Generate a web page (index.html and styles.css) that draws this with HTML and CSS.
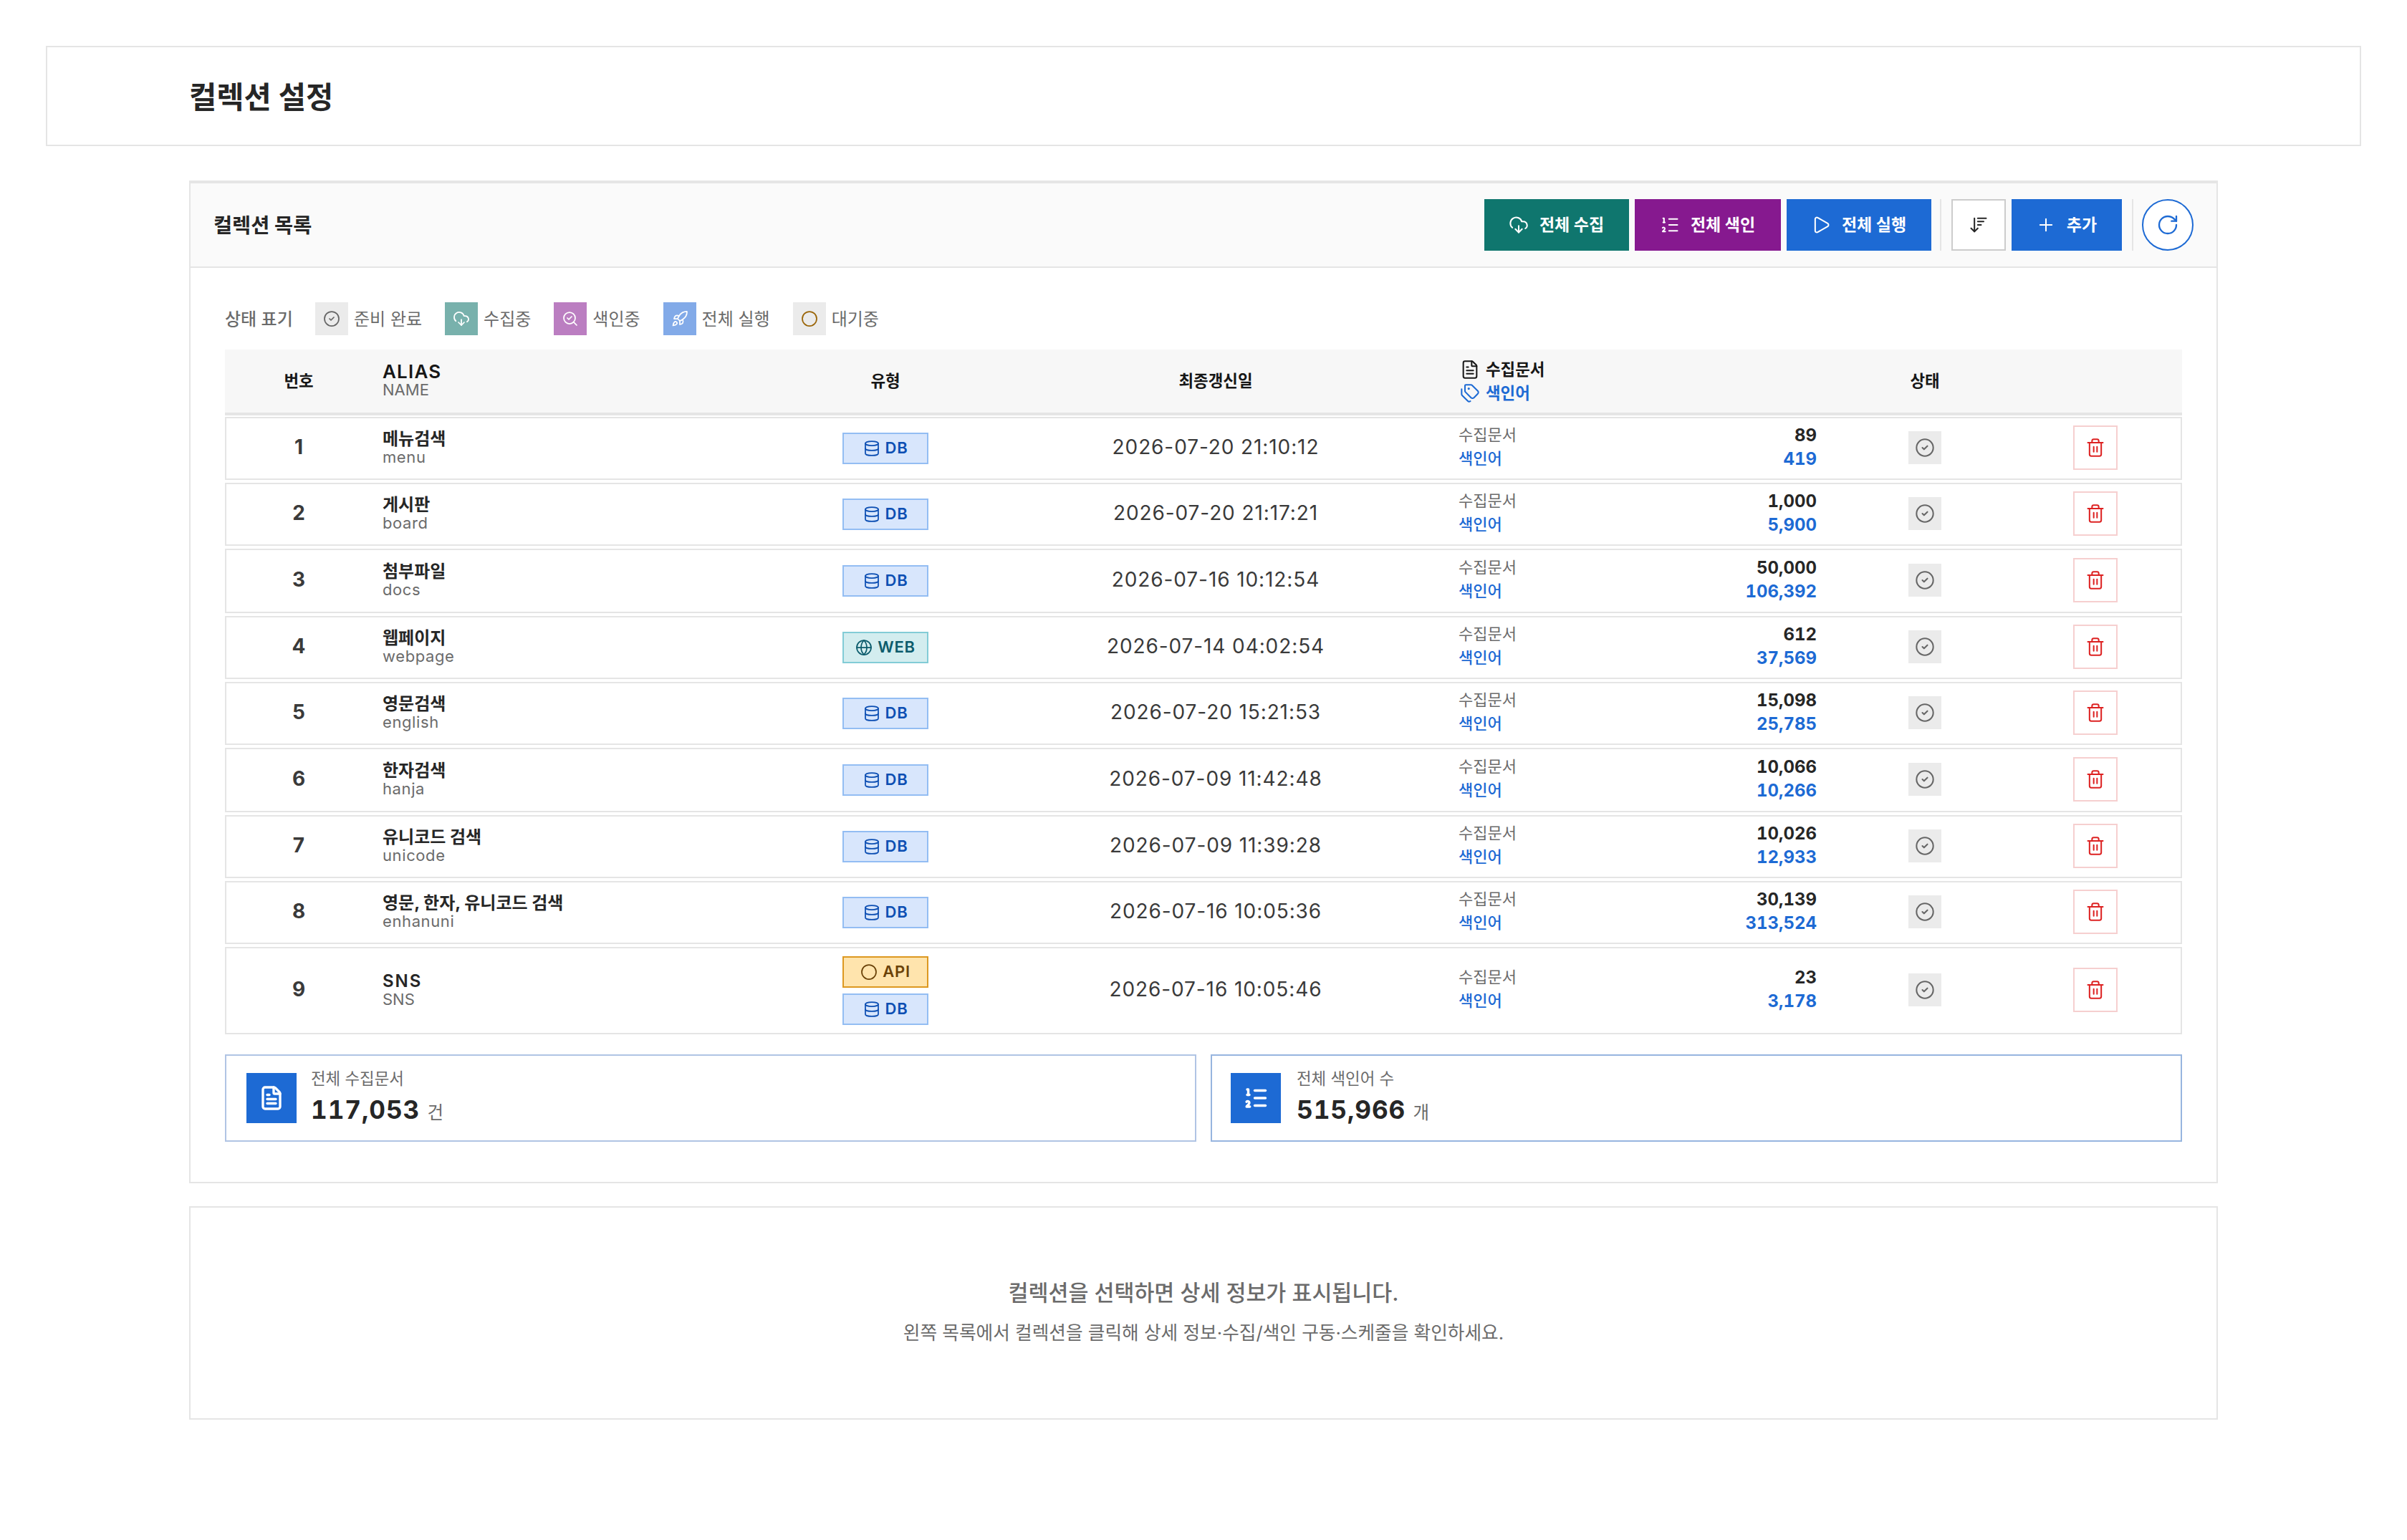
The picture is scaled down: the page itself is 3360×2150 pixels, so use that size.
FILE: index.html
```html
<!DOCTYPE html>
<html lang="ko">
<head>
    <meta charset="UTF-8">
    <meta name="viewport" content="width=device-width, initial-scale=1.0">
    <title>컬렉션 설정</title>
    <link rel="stylesheet" href="styles.css">
</head>
<body>

<!-- icon sprite -->
<svg class="sprite" xmlns="http://www.w3.org/2000/svg">
    <symbol id="i-cloud" viewBox="0 0 24 24"><path d="M12 13v8l-4-4"/><path d="m12 21 4-4"/><path d="M4.393 15.269A7 7 0 1 1 15.71 8h1.79a4.5 4.5 0 0 1 2.436 8.284"/></symbol>
    <symbol id="i-list" viewBox="0 0 24 24"><path d="M11 5h10"/><path d="M11 12h10"/><path d="M11 19h10"/><path d="M4 4h1v5"/><path d="M4 9h2"/><path d="M6.5 20H3.4c0-1 2.6-1.925 2.6-3.5a1.5 1.5 0 0 0-2.6-1.02"/></symbol>
    <symbol id="i-play" viewBox="0 0 24 24"><path d="M5 5a2 2 0 0 1 3.008-1.728l11.997 6.998a2 2 0 0 1 .003 3.458l-12 7A2 2 0 0 1 5 19z"/></symbol>
    <symbol id="i-sort" viewBox="0 0 24 24"><path d="m3 16 4 4 4-4"/><path d="M7 20V4"/><path d="M11 4h10"/><path d="M11 8h7"/><path d="M11 12h4"/></symbol>
    <symbol id="i-plus" viewBox="0 0 24 24"><path d="M5 12h14"/><path d="M12 5v14"/></symbol>
    <symbol id="i-refresh" viewBox="0 0 24 24"><path d="M21 12a9 9 0 1 1-9-9c2.52 0 4.93 1 6.74 2.74L21 8"/><path d="M21 3v5h-5"/></symbol>
    <symbol id="i-check" viewBox="0 0 24 24"><circle cx="12" cy="12" r="10"/><path d="m9 12 2 2 4-4"/></symbol>
    <symbol id="i-search" viewBox="0 0 24 24"><path d="m8 11 2 2 4-4"/><circle cx="11" cy="11" r="8"/><path d="m21 21-4.3-4.3"/></symbol>
    <symbol id="i-rocket" viewBox="0 0 24 24"><path d="M12 15v5s3.03-.55 4-2c1.08-1.62 0-5 0-5"/><path d="M4.5 16.5c-1.5 1.26-2 5-2 5s3.74-.5 5-2c.71-.84.7-2.13-.09-2.91a2.18 2.18 0 0 0-2.91-.09"/><path d="M9 12a22 22 0 0 1 2-3.95A12.88 12.88 0 0 1 22 2c0 2.72-.78 7.5-6 11a22.4 22.4 0 0 1-4 2z"/><path d="M9 12H4s.55-3.03 2-4c1.62-1.08 5 .05 5 .05"/></symbol>
    <symbol id="i-circle" viewBox="0 0 24 24"><circle cx="12" cy="12" r="10"/></symbol>
    <symbol id="i-file" viewBox="0 0 24 24"><path d="M6 22a2 2 0 0 1-2-2V4a2 2 0 0 1 2-2h8a2.4 2.4 0 0 1 1.704.706l3.588 3.588A2.4 2.4 0 0 1 20 8v12a2 2 0 0 1-2 2z"/><path d="M14 2v5a1 1 0 0 0 1 1h5"/><path d="M10 9H8"/><path d="M16 13H8"/><path d="M16 17H8"/></symbol>
    <symbol id="i-tags" viewBox="0 0 24 24"><path d="M13.172 2a2 2 0 0 1 1.414.586l6.71 6.71a2.4 2.4 0 0 1 0 3.408l-4.592 4.592a2.4 2.4 0 0 1-3.408 0l-6.71-6.71A2 2 0 0 1 6 9.172V3a1 1 0 0 1 1-1z"/><path d="M2 7v6.172a2 2 0 0 0 .586 1.414l6.71 6.71a2.4 2.4 0 0 0 3.191.193"/><circle cx="10.5" cy="6.5" r=".5" fill="currentColor"/></symbol>
    <symbol id="i-db" viewBox="0 0 24 24"><ellipse cx="12" cy="5" rx="9" ry="3"/><path d="M3 5V19A9 3 0 0 0 21 19V5"/><path d="M3 12A9 3 0 0 0 21 12"/></symbol>
    <symbol id="i-globe" viewBox="0 0 24 24"><circle cx="12" cy="12" r="10"/><path d="M12 2a14.5 14.5 0 0 0 0 20 14.5 14.5 0 0 0 0-20"/><path d="M2 12h20"/></symbol>
    <symbol id="i-trash" viewBox="0 0 24 24"><path d="M10 11v6"/><path d="M14 11v6"/><path d="M19 6v14a2 2 0 0 1-2 2H7a2 2 0 0 1-2-2V6"/><path d="M3 6h18"/><path d="M8 6V4a2 2 0 0 1 2-2h4a2 2 0 0 1 2 2v2"/></symbol>
</svg>

<header class="page-header">
    <h1>컬렉션 설정</h1>
</header>

<main class="container">
    <section class="card">
        <div class="card-header">
            <h2>컬렉션 목록</h2>
            <div class="toolbar">
                <button class="btn btn-collect"><svg class="icon"><use href="#i-cloud"/></svg><span>전체 수집</span></button>
                <button class="btn btn-index"><svg class="icon"><use href="#i-list"/></svg><span>전체 색인</span></button>
                <button class="btn btn-run"><svg class="icon"><use href="#i-play"/></svg><span>전체 실행</span></button>
                <span class="divider"></span>
                <button class="btn btn-sort"><svg class="icon"><use href="#i-sort"/></svg></button>
                <button class="btn btn-add"><svg class="icon"><use href="#i-plus"/></svg><span>추가</span></button>
                <span class="divider divider-last"></span>
                <button class="btn-refresh"><svg class="icon"><use href="#i-refresh"/></svg></button>
            </div>
        </div>

        <div class="card-body">
            <div class="legend">
                <span class="legend-title">상태 표기</span>
                <div class="legend-item"><span class="status"><svg class="icon"><use href="#i-check"/></svg></span><em>준비 완료</em></div>
                <div class="legend-item"><span class="status collecting"><svg class="icon"><use href="#i-cloud"/></svg></span><em>수집중</em></div>
                <div class="legend-item"><span class="status indexing"><svg class="icon"><use href="#i-search"/></svg></span><em>색인중</em></div>
                <div class="legend-item"><span class="status running"><svg class="icon"><use href="#i-rocket"/></svg></span><em>전체 실행</em></div>
                <div class="legend-item"><span class="status waiting"><svg class="icon"><use href="#i-circle"/></svg></span><em>대기중</em></div>
            </div>

            <div class="list-head">
                <div class="col-center">번호</div>
                <div class="head-name"><strong>ALIAS</strong><span>NAME</span></div>
                <div class="col-center">유형</div>
                <div class="col-center">최종갱신일</div>
                <div class="head-count">
                    <div><svg class="icon"><use href="#i-file"/></svg>수집문서</div>
                    <div class="blue"><svg class="icon"><use href="#i-tags"/></svg>색인어</div>
                </div>
                <div class="col-center">상태</div>
                <div></div>
            </div>

            <div class="list">
                <div class="row">
                    <div class="no">1</div>
                    <div class="name"><strong>메뉴검색</strong><span>menu</span></div>
                    <div class="types"><span class="badge db"><svg class="icon"><use href="#i-db"/></svg><b>DB</b></span></div>
                    <div class="date">2026-07-20 21:10:12</div>
                    <div class="count"><div><span>수집문서</span><b>89</b></div><div class="blue"><span>색인어</span><b>419</b></div></div>
                    <div class="state"><span class="status"><svg class="icon"><use href="#i-check"/></svg></span></div>
                    <div class="action"><button class="btn-delete"><svg class="icon"><use href="#i-trash"/></svg></button></div>
                </div>
                <div class="row">
                    <div class="no">2</div>
                    <div class="name"><strong>게시판</strong><span>board</span></div>
                    <div class="types"><span class="badge db"><svg class="icon"><use href="#i-db"/></svg><b>DB</b></span></div>
                    <div class="date">2026-07-20 21:17:21</div>
                    <div class="count"><div><span>수집문서</span><b>1,000</b></div><div class="blue"><span>색인어</span><b>5,900</b></div></div>
                    <div class="state"><span class="status"><svg class="icon"><use href="#i-check"/></svg></span></div>
                    <div class="action"><button class="btn-delete"><svg class="icon"><use href="#i-trash"/></svg></button></div>
                </div>
                <div class="row">
                    <div class="no">3</div>
                    <div class="name"><strong>첨부파일</strong><span>docs</span></div>
                    <div class="types"><span class="badge db"><svg class="icon"><use href="#i-db"/></svg><b>DB</b></span></div>
                    <div class="date">2026-07-16 10:12:54</div>
                    <div class="count"><div><span>수집문서</span><b>50,000</b></div><div class="blue"><span>색인어</span><b>106,392</b></div></div>
                    <div class="state"><span class="status"><svg class="icon"><use href="#i-check"/></svg></span></div>
                    <div class="action"><button class="btn-delete"><svg class="icon"><use href="#i-trash"/></svg></button></div>
                </div>
                <div class="row">
                    <div class="no">4</div>
                    <div class="name"><strong>웹페이지</strong><span>webpage</span></div>
                    <div class="types"><span class="badge web"><svg class="icon"><use href="#i-globe"/></svg><b>WEB</b></span></div>
                    <div class="date">2026-07-14 04:02:54</div>
                    <div class="count"><div><span>수집문서</span><b>612</b></div><div class="blue"><span>색인어</span><b>37,569</b></div></div>
                    <div class="state"><span class="status"><svg class="icon"><use href="#i-check"/></svg></span></div>
                    <div class="action"><button class="btn-delete"><svg class="icon"><use href="#i-trash"/></svg></button></div>
                </div>
                <div class="row">
                    <div class="no">5</div>
                    <div class="name"><strong>영문검색</strong><span>english</span></div>
                    <div class="types"><span class="badge db"><svg class="icon"><use href="#i-db"/></svg><b>DB</b></span></div>
                    <div class="date">2026-07-20 15:21:53</div>
                    <div class="count"><div><span>수집문서</span><b>15,098</b></div><div class="blue"><span>색인어</span><b>25,785</b></div></div>
                    <div class="state"><span class="status"><svg class="icon"><use href="#i-check"/></svg></span></div>
                    <div class="action"><button class="btn-delete"><svg class="icon"><use href="#i-trash"/></svg></button></div>
                </div>
                <div class="row">
                    <div class="no">6</div>
                    <div class="name"><strong>한자검색</strong><span>hanja</span></div>
                    <div class="types"><span class="badge db"><svg class="icon"><use href="#i-db"/></svg><b>DB</b></span></div>
                    <div class="date">2026-07-09 11:42:48</div>
                    <div class="count"><div><span>수집문서</span><b>10,066</b></div><div class="blue"><span>색인어</span><b>10,266</b></div></div>
                    <div class="state"><span class="status"><svg class="icon"><use href="#i-check"/></svg></span></div>
                    <div class="action"><button class="btn-delete"><svg class="icon"><use href="#i-trash"/></svg></button></div>
                </div>
                <div class="row">
                    <div class="no">7</div>
                    <div class="name"><strong>유니코드 검색</strong><span>unicode</span></div>
                    <div class="types"><span class="badge db"><svg class="icon"><use href="#i-db"/></svg><b>DB</b></span></div>
                    <div class="date">2026-07-09 11:39:28</div>
                    <div class="count"><div><span>수집문서</span><b>10,026</b></div><div class="blue"><span>색인어</span><b>12,933</b></div></div>
                    <div class="state"><span class="status"><svg class="icon"><use href="#i-check"/></svg></span></div>
                    <div class="action"><button class="btn-delete"><svg class="icon"><use href="#i-trash"/></svg></button></div>
                </div>
                <div class="row">
                    <div class="no">8</div>
                    <div class="name"><strong>영문, 한자, 유니코드 검색</strong><span>enhanuni</span></div>
                    <div class="types"><span class="badge db"><svg class="icon"><use href="#i-db"/></svg><b>DB</b></span></div>
                    <div class="date">2026-07-16 10:05:36</div>
                    <div class="count"><div><span>수집문서</span><b>30,139</b></div><div class="blue"><span>색인어</span><b>313,524</b></div></div>
                    <div class="state"><span class="status"><svg class="icon"><use href="#i-check"/></svg></span></div>
                    <div class="action"><button class="btn-delete"><svg class="icon"><use href="#i-trash"/></svg></button></div>
                </div>
                <div class="row row-tall">
                    <div class="no">9</div>
                    <div class="name name-latin"><strong>SNS</strong><span>SNS</span></div>
                    <div class="types">
                        <span class="badge api"><svg class="icon"><use href="#i-circle"/></svg><b>API</b></span>
                        <span class="badge db"><svg class="icon"><use href="#i-db"/></svg><b>DB</b></span>
                    </div>
                    <div class="date">2026-07-16 10:05:46</div>
                    <div class="count"><div><span>수집문서</span><b>23</b></div><div class="blue"><span>색인어</span><b>3,178</b></div></div>
                    <div class="state"><span class="status"><svg class="icon"><use href="#i-check"/></svg></span></div>
                    <div class="action"><button class="btn-delete"><svg class="icon"><use href="#i-trash"/></svg></button></div>
                </div>
            </div>

            <div class="summary">
                <div class="summary-card">
                    <span class="summary-icon"><svg class="icon"><use href="#i-file"/></svg></span>
                    <div>
                        <div class="summary-label">전체 수집문서</div>
                        <div class="summary-value">117,053 <small>건</small></div>
                    </div>
                </div>
                <div class="summary-card summary-index">
                    <span class="summary-icon"><svg class="icon"><use href="#i-list"/></svg></span>
                    <div>
                        <div class="summary-label">전체 색인어 수</div>
                        <div class="summary-value">515,966 <small>개</small></div>
                    </div>
                </div>
            </div>
        </div>
    </section>

    <section class="empty">
        <p class="empty-title">컬렉션을 선택하면 상세 정보가 표시됩니다.</p>
        <p class="empty-text">왼쪽 목록에서 컬렉션을 클릭해 상세 정보·수집/색인 구동·스케줄을 확인하세요.</p>
    </section>
</main>

</body>
</html>
```
FILE: styles.css
```css
* {
    box-sizing: border-box;
    margin: 0;
    padding: 0;
}
body {
    padding: 64px;
    background: #fff;
    color: #262626;
    font-family: Inter, "Noto Sans CJK KR", sans-serif;
    font-size: 24px;
}
button {
    font-family: inherit;
    border: none;
}
.sprite {
    display: none;
}
.icon {
    width: 28px;
    height: 28px;
    flex: none;
    fill: none;
    stroke: currentColor;
    stroke-width: 1.75;
    stroke-linecap: round;
    stroke-linejoin: round;
}
.blue {
    color: #1d6ad4;
}

/* page header */
.page-header {
    display: flex;
    align-items: center;
    height: 140px;
    padding-left: 198px;
    padding-bottom: 2px;
    border: 2px solid #e5e5e5;
}
.page-header h1 {
    font-size: 41.6px;
    font-weight: 700;
}
.container {
    width: 2832px;
    margin: 48px auto 0;
}

/* collection card */
.card {
    height: 1400px;
    border: 2px solid #e5e5e5;
    border-top-width: 4px;
}
.card-header {
    display: flex;
    align-items: center;
    justify-content: space-between;
    height: 118px;
    padding: 0 32px;
    background: #fafafa;
    border-bottom: 2px solid #e5e5e5;
}
.card-header h2 {
    padding-bottom: 3px;
    font-size: 28.4px;
    font-weight: 700;
}
.toolbar {
    display: flex;
    gap: 8px;
}
.btn {
    display: flex;
    align-items: center;
    justify-content: center;
    gap: 15px;
    width: 202px;
    height: 72px;
    color: #fff;
    font-size: 23px;
    font-weight: 700;
}
.btn span {
    padding-bottom: 4px;
    padding-right: 1px;
}
.btn-collect {
    background: #0f766e;
}
.btn-index {
    width: 204px;
    background: #86198f;
}
.btn-run {
    background: #1d6ad4;
}
.btn-sort {
    width: 76px;
    background: #fff;
    border: 2px solid #ccc;
    color: #262626;
}
.btn-add {
    width: 154px;
    background: #1d6ad4;
}
.divider {
    width: 2px;
    height: 72px;
    margin: 0 6px 0 4px;
    background: #e5e5e5;
}
.divider-last {
    margin: 0 4px 0 6px;
}
.btn-refresh {
    display: flex;
    align-items: center;
    justify-content: center;
    width: 72px;
    height: 72px;
    border: 2px solid #1d6ad4;
    border-radius: 50%;
    background: #fff;
    color: #1d6ad4;
}
.btn-refresh .icon {
    width: 32px;
    height: 32px;
}
.card-body {
    padding: 48px;
}

/* status legend */
.legend {
    display: flex;
    align-items: center;
    gap: 32px;
    height: 46px;
    margin-bottom: 20px;
    color: #6b6b6b;
}
.legend-title {
    width: 94px;
    padding-bottom: 4px;
    font-weight: 500;
    white-space: nowrap;
}
.legend-item {
    display: flex;
    align-items: center;
    gap: 8px;
}
.legend-item em {
    padding-bottom: 4px;
    font-style: normal;
}
.status {
    display: flex;
    align-items: center;
    justify-content: center;
    width: 46px;
    height: 46px;
    background: #ebebeb;
    color: #666;
}
.legend .icon {
    width: 24px;
    height: 24px;
}
.collecting {
    background: #78b1ac;
    color: #fff;
}
.indexing {
    background: #bb7ec1;
    color: #fff;
}
.running {
    background: #82aae8;
    color: #fff;
}
.waiting {
    color: #9a6508;
}

/* collection list */
.list-head,
.row {
    display: grid;
    grid-template-columns: 204px 578px 276px 646px 531px 272px 1fr;
    align-items: center;
}
.list-head {
    height: 92px;
    padding: 0 2px;
    background: #f7f7f7;
    border-bottom: 4px solid #e5e5e5;
    color: #171717;
    font-size: 22.4px;
    font-weight: 700;
}
.col-center {
    text-align: center;
    padding-bottom: 4px;
}
.col-center:first-child,
.no {
    padding-right: 2px;
}
.name,
.head-name {
    display: flex;
    flex-direction: column;
    padding-left: 14px;
    line-height: 26px;
}
.name strong,
.head-name strong {
    line-height: 24px;
    font-size: 24px;
}
.head-name strong {
    font-size: 26px;
    font-weight: 600;
    letter-spacing: 1.2px;
}
.name span,
.head-name span {
    color: #6b6b6b;
    font-size: 22px;
    font-weight: 400;
}
.name span {
    letter-spacing: 0.6px;
}
.name-latin strong {
    font-weight: 600;
    letter-spacing: 2px;
}
.name-latin span {
    letter-spacing: 0;
}
.head-count {
    padding-left: 18px;
    line-height: 33px;
}
.head-count div {
    display: flex;
    align-items: center;
    gap: 8px;
}
.list {
    display: flex;
    flex-direction: column;
    gap: 4px;
    margin-top: 2px;
}
.row {
    height: 88px;
    border: 2px solid #e5e5e5;
}
.row:nth-child(3),
.row:nth-child(6) {
    height: 90px;
}
.row-tall {
    height: 122px;
}
.no,
.date {
    padding-bottom: 4px;
    color: #3a3a3a;
    font-size: 28px;
    text-align: center;
}
.no {
    font-weight: 700;
}
.date {
    letter-spacing: 0.9px;
}
.types {
    display: flex;
    flex-direction: column;
    align-items: center;
    gap: 8px;
}
.badge {
    display: flex;
    align-items: center;
    justify-content: center;
    gap: 7px;
    width: 120px;
    height: 44px;
    border: 2px solid;
    font-size: 22px;
}
.badge b {
    padding-bottom: 3px;
    font-weight: 600;
    letter-spacing: 0.8px;
}
.badge .icon {
    width: 24px;
    height: 24px;
}
.db {
    background: #d8e6fc;
    border-color: #93bdf3;
    color: #0d4fb3;
}
.web {
    background: #d3edef;
    border-color: #82ccd6;
    color: #0c5c6c;
}
.api {
    background: #ffe4ad;
    border-color: #dd9820;
    color: #6b4208;
}
.count {
    padding: 0 15px 4px 16px;
    line-height: 33px;
}
.count div {
    display: flex;
    justify-content: space-between;
}
.count span {
    color: #6b6b6b;
    font-size: 22px;
}
.count .blue span {
    color: inherit;
    font-weight: 500;
}
.count b {
    font-variant-numeric: tabular-nums;
}
.state {
    display: flex;
    justify-content: center;
    padding-bottom: 2px;
}
.action {
    display: flex;
    padding: 0 0 2px 71px;
}
.btn-delete {
    display: flex;
    align-items: center;
    justify-content: center;
    width: 62px;
    height: 62px;
    background: #fff;
    border: 2px solid #f6cfcf;
    color: #dd2222;
}

/* totals */
.summary {
    display: grid;
    grid-template-columns: 1fr 1fr;
    gap: 20px;
    margin-top: 28px;
}
.summary-card {
    display: flex;
    align-items: center;
    gap: 20px;
    height: 122px;
    padding: 0 28px;
    border: 2px solid #b0c4e4;
}
.summary-index {
    gap: 22px;
    padding-left: 26px;
    border-color: #97b5df;
}
.summary-icon {
    display: flex;
    align-items: center;
    justify-content: center;
    width: 70px;
    height: 70px;
    background: #1d6ad4;
    color: #fff;
}
.summary-icon .icon {
    width: 36px;
    height: 36px;
    stroke-width: 2.25;
}
.summary-label {
    color: #6b6b6b;
    font-size: 22.4px;
    line-height: 36px;
}
.summary-value {
    font-size: 35.2px;
    font-weight: 700;
    font-variant-numeric: tabular-nums;
    letter-spacing: 0.9px;
    line-height: 50px;
}
.summary-value small {
    color: #6b6b6b;
    font-size: 24.5px;
    font-weight: 400;
}

/* empty detail */
.empty {
    display: flex;
    flex-direction: column;
    align-items: center;
    justify-content: center;
    height: 298px;
    margin-top: 32px;
    padding-bottom: 4px;
    border: 2px solid #e5e5e5;
    color: #6b6b6b;
}
.empty-title {
    font-size: 30.4px;
    font-weight: 500;
    line-height: 60px;
}
.empty-text {
    font-size: 25.7px;
    line-height: 52px;
}
```
